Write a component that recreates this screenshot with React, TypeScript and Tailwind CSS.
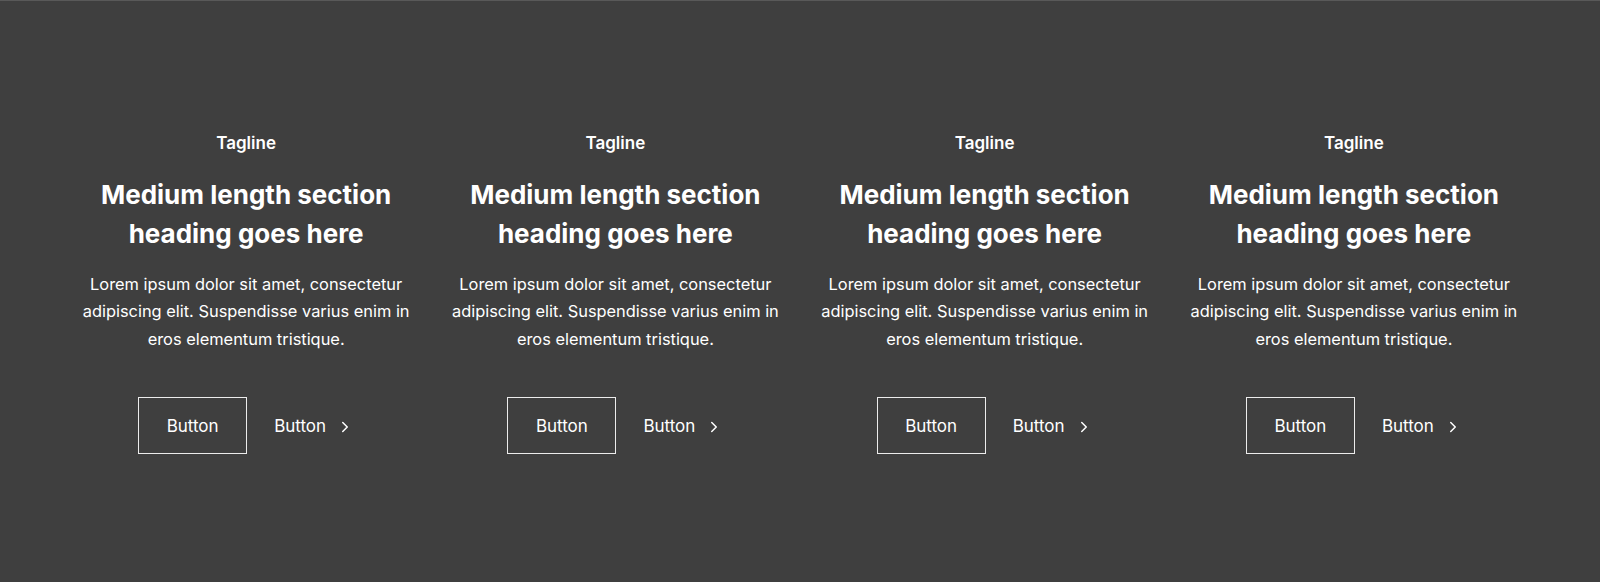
import React from "react";
import { ChevronRight } from "lucide-react";

function Card() {
  return (
    <div className="flex flex-col items-center text-center">
      <p className="text-[17px] leading-[24px] font-semibold text-white">Tagline</p>
      <h2 className="mt-[21px] text-[26px] leading-[38.8px] font-bold text-white">
        Medium length section heading goes here
      </h2>
      <p className="mt-[17px] text-[16.4px] leading-[27.5px] text-white">
        Lorem ipsum dolor sit amet, consectetur adipiscing elit. Suspendisse varius enim in eros elementum tristique.
      </p>
      <div className="mt-[44px] flex items-center gap-[27px]">
        <button className="h-[57px] w-[109px] border border-white/90 pt-[2px] text-[17px] text-white">Button</button>
        <button className="flex items-center gap-[10px] pt-[2px] text-[17px] text-white">
          Button
          <ChevronRight size={18} strokeWidth={2} />
        </button>
      </div>
    </div>
  );
}

export default function App() {
  return (
    <div
      className="min-h-[582px] w-full border-t border-[#595959] bg-[#3f3f3f] px-[78px] pt-[130px]"
      style={{ fontFamily: "Inter, 'Noto Sans', sans-serif" }}
    >
      <div className="grid grid-cols-4 gap-x-[33px]">
        <Card />
        <Card />
        <Card />
        <Card />
      </div>
    </div>
  );
}
